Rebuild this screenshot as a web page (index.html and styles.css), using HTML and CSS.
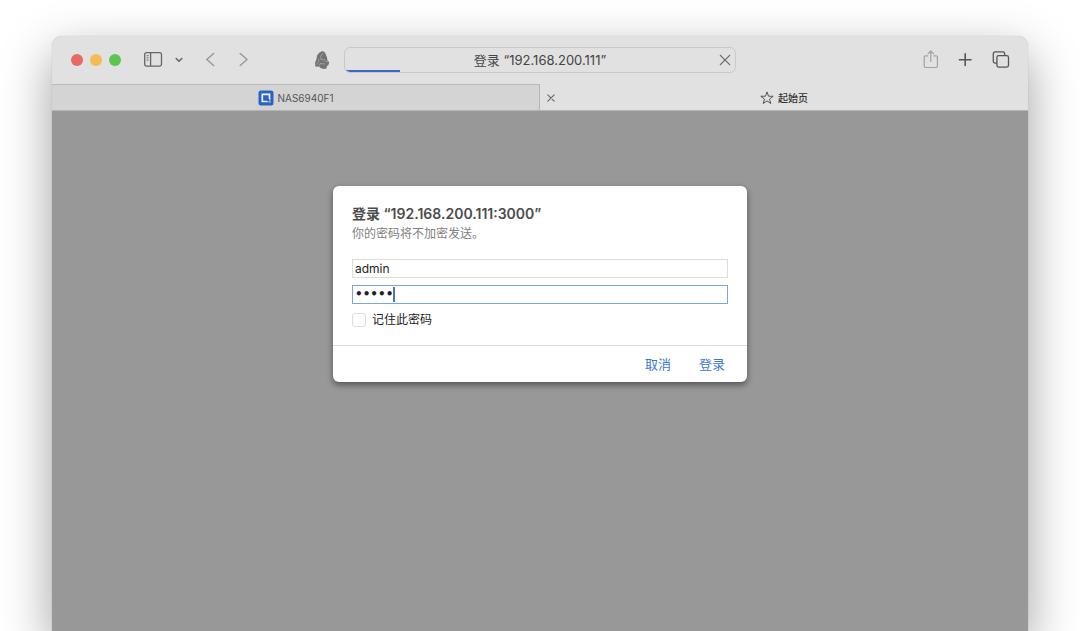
FILE: index.html
```html
<!DOCTYPE html>
<html lang="zh-CN">
<head>
<meta charset="utf-8">
<meta name="viewport" content="width=device-width, initial-scale=1">
<title>登录</title>
<link rel="stylesheet" href="styles.css">
</head>
<body>
<div class="window">
  <header class="toolbar">
    <div class="tools-left">
      <div class="lights">
        <button class="light red" aria-label="关闭窗口"></button>
        <button class="light yellow" aria-label="最小化"></button>
        <button class="light green" aria-label="全屏"></button>
      </div>
      <div class="sidebar-tools">
        <button class="icon" aria-label="边栏">
          <svg width="20" height="18" viewBox="0 0 20 18" fill="none" stroke="#666" stroke-width="1.3"><rect x="1.7" y="1.7" width="16.8" height="13.4" rx="1.8"/><path d="M7.6 1.7v13.4"/><path d="M3.6 4.700h2M3.6 6.900h2M3.6 9.100h2" stroke-width="1"/></svg>
        </button>
        <button class="icon" aria-label="标签页组">
          <svg width="8" height="18" viewBox="0 0 8 18" fill="none" stroke="#666" stroke-width="1.6" stroke-linecap="round" stroke-linejoin="round"><path d="M1.2 7.500 4 10.300 6.800 7.500"/></svg>
        </button>
      </div>
      <div class="history">
        <button class="icon" aria-label="后退">
          <svg width="10" height="18" viewBox="0 0 10 18" fill="none" stroke="#999" stroke-width="1.5" stroke-linecap="round" stroke-linejoin="round"><path d="M8.600 2.500 1.800 8.500l6.800 6"/></svg>
        </button>
        <button class="icon" aria-label="前进">
          <svg width="10" height="18" viewBox="0 0 10 18" fill="none" stroke="#999" stroke-width="1.5" stroke-linecap="round" stroke-linejoin="round"><path d="m2.200 2.500 6.800 6-6.800 6"/></svg>
        </button>
      </div>
      <button class="icon extension" aria-label="扩展">
        <svg width="16" height="20" viewBox="0 0 16 20"><path fill="#747474" d="M8.500 1 11 2.500l2 5 .5 3 1.700 1.500-.700 3-1.500 1-.500 2.500-3 .500L6.500 18l-1.500-1.500-3.500.300L1 13 2.500 9 3 5.500 5.500 2.500z"/><path fill="none" stroke="#a8a8a8" stroke-width=".8" d="M9 3 6.500 6.500l.500 3M7 9.500l4 .500M11 11l3 1M5 9 4.500 12l-2 2.500M6 13.500l5 .500M5.500 16l.500-2.500"/></svg>
      </button>
    </div>
    <div class="address">
      <input class="address-input" type="text" aria-label="地址" value="登录 “192.168.200.111”" readonly>
      <button class="icon stop" aria-label="停止载入">
        <svg width="12" height="12" viewBox="0 0 12 12" stroke="#666" stroke-width="1.2" stroke-linecap="round"><path d="m1.300 1.300 9.400 9.400M10.700 1.300 1.300 10.700"/></svg>
      </button>
      <div class="progress"></div>
    </div>
    <div class="tools-right">
      <button class="icon" aria-label="共享">
        <svg width="16" height="20" viewBox="0 0 16 20" fill="none" stroke="#a2a2a2" stroke-width="1.200" stroke-linecap="round" stroke-linejoin="round"><path d="M5.700 5.800H3.400A1.200 1.200 0 0 0 2.200 7v9.300a1.200 1.200 0 0 0 1.200 1.200h10.800a1.200 1.200 0 0 0 1.200-1.200V7a1.200 1.200 0 0 0-1.200-1.200h-2.300M8.800 11.500V1M6.100 3.700 8.800 1l2.700 2.700"/></svg>
      </button>
      <button class="icon" aria-label="新建标签页">
        <svg width="14" height="14" viewBox="0 0 14 14" stroke="#555" stroke-width="1.600" stroke-linecap="round"><path d="M7.200 .900v11.600M1.400 6.700h11.600"/></svg>
      </button>
      <button class="icon" aria-label="标签页概览">
        <svg width="18" height="18" viewBox="0 0 18 18" fill="none" stroke="#555" stroke-width="1.300" stroke-linejoin="round"><rect x="4.900" y="4.700" width="11.600" height="11.400" rx="1.800"/><path d="M4.900 12.100H3.100a1.800 1.800 0 0 1-1.800-1.800V2.700A1.800 1.800 0 0 1 3.100 .900h7.800a1.800 1.800 0 0 1 1.800 1.800v2"/></svg>
      </button>
    </div>
  </header>

  <nav class="tabs" aria-label="标签页">
    <div class="tab inactive">
      <svg width="16" height="16" viewBox="0 0 16 16"><rect x=".5" y=".5" width="15" height="15" rx="2.500" fill="#2c62c0"/><path d="M4.300 4.300h7.200v7.200H4.300z" fill="none" stroke="#eef5ff" stroke-width="1.700"/><path d="m9.400 9.400 3.300 3.300" stroke="#2c62c0" stroke-width="2.600"/><path d="m10.800 10.800 1.700 1.700" stroke="#9cc4f5" stroke-width="1.400"/></svg>
      <span>NAS6940F1</span>
    </div>
    <div class="tab active">
      <button class="icon tab-close" aria-label="关闭标签页">
        <svg width="8" height="8" viewBox="0 0 8 8" stroke="#666" stroke-width="1.100" stroke-linecap="round"><path d="m.8.8 6.400 6.400M7.200.8.8 7.200"/></svg>
      </button>
      <svg width="14" height="14" viewBox="0 0 14 14" fill="none" stroke="#555" stroke-width="1" stroke-linejoin="round"><path d="m7 .9 1.500 4.300 4.700.1-3.700 2.800 1.300 4.400L7 9.900l-3.800 2.600 1.300-4.400L.8 5.300l4.700-.1z"/></svg>
      <span>起始页</span>
    </div>
  </nav>

  <main class="page">
    <form class="dialog" role="dialog" aria-labelledby="dialog-title">
      <div class="dialog-body">
        <h1 class="dialog-title" id="dialog-title">登录 “192.168.200.111:3000”</h1>
        <p class="dialog-note">你的密码将不加密发送。</p>
        <input class="field" type="text" value="admin" aria-label="用户名">
        <div class="password">
          <input class="field focused" type="password" value="admin" aria-label="密码">
          <span class="caret"></span>
        </div>
        <label class="remember"><input class="checkbox" type="checkbox">记住此密码</label>
      </div>
      <footer class="dialog-actions">
        <button class="action" type="button">取消</button>
        <button class="action" type="button">登录</button>
      </footer>
    </form>
  </main>
</div>
</body>
</html>
```
FILE: styles.css
```css
* {
  box-sizing: border-box;
}

body {
  margin: 0;
  min-height: 100vh;
  display: flex;
  padding: 36px 52px 0;
  overflow: hidden;
  background: #fff;
  color: #444;
  font-family: Inter, "Noto Sans CJK SC", sans-serif;
  font-size: 12px;
}

button,
input {
  margin: 0;
  padding: 0;
  border: 0;
  background: none;
  color: inherit;
  font: inherit;
  outline: none;
}

svg {
  display: block;
  flex: none;
}

.window {
  flex: 1;
  min-width: 0;
  display: flex;
  flex-direction: column;
  border-radius: 10px 10px 0 0;
  background: #e1e1e1;
  box-shadow: 0 0 1px rgba(0, 0, 0, 0.3), 0 18px 50px rgba(0, 0, 0, 0.38);
}

.toolbar {
  display: grid;
  grid-template-columns: minmax(0, 1fr) 392px minmax(0, 1fr);
  align-items: center;
  height: 48px;
}

.icon {
  display: flex;
  align-items: center;
}

.tools-left,
.tools-right,
.lights,
.sidebar-tools,
.history {
  display: flex;
  align-items: center;
}

.tools-left {
  gap: 22px;
  padding: 0 14px 0 19px;
}

.lights {
  gap: 7px;
}

.light {
  width: 12px;
  height: 12px;
  border-radius: 50%;
}

.red {
  background: #e66a61;
}

.yellow {
  background: #f3bb51;
}

.green {
  background: #5dc353;
}

.sidebar-tools {
  gap: 12px;
}

.history {
  gap: 23px;
}

.extension {
  margin-left: auto;
}

.tools-right {
  justify-content: flex-end;
  gap: 20px;
  padding-right: 18px;
}

.address {
  position: relative;
  height: 26px;
  border: 1px solid #c9c9c9;
  border-radius: 6px;
  overflow: hidden;
}

.address-input {
  display: block;
  width: 100%;
  height: 24px;
  padding-bottom: 2px;
  font-size: 13px;
  text-align: center;
}

.stop {
  position: absolute;
  top: 6px;
  right: 4px;
}

.progress {
  position: absolute;
  left: 0;
  bottom: 0;
  width: 14%;
  height: 2px;
  background: #3c68c8;
}

.tabs {
  display: grid;
  grid-template-columns: 1fr 1fr;
  height: 27px;
  border-bottom: 1px solid #b4b4b4;
  font-size: 10px;
}

.tab {
  position: relative;
  display: flex;
  align-items: center;
  justify-content: center;
  gap: 4px;
}

.inactive {
  border-top: 1px solid #bababa;
  border-right: 1px solid #b4b4b4;
  background: #d4d4d4;
  color: #555;
}

.active {
  padding-top: 1px;
  color: #333;
  font-weight: 500;
}

.tab-close {
  position: absolute;
  left: 7px;
}

.page {
  flex: 1;
  display: flex;
  justify-content: center;
  align-items: flex-start;
  padding-top: 75px;
  background: #989898;
}

.dialog {
  width: 414px;
  border-radius: 6px;
  background: #fff;
  box-shadow: 0 3px 6px rgba(0, 0, 0, 0.45);
}

.dialog-body {
  padding: 18px 19px 15px;
}

.dialog-title {
  margin: 0;
  color: #4c4c4c;
  font-size: 14px;
  font-weight: 600;
  line-height: 20px;
}

.dialog-note {
  margin: 0 0 15px;
  color: #808080;
  font-size: 12px;
  line-height: 20px;
}

.field {
  display: block;
  width: 100%;
  height: 19px;
  padding: 0 2px 1px;
  border: 1px solid #dcdcdc;
  color: #222;
  line-height: 16px;
}

.password {
  position: relative;
  margin: 7px 0 6px;
}

.focused {
  border-color: #78a4ea;
  font-family: "DejaVu Sans", sans-serif;
  font-weight: 700;
}

.caret {
  position: absolute;
  top: 2px;
  left: 41px;
  width: 2px;
  height: 15px;
  background: #4a6ed8;
}

.remember {
  display: flex;
  align-items: center;
  gap: 6px;
  color: #222;
  line-height: 20px;
}

.checkbox {
  appearance: none;
  width: 14px;
  height: 14px;
  border: 1px solid #dcdcdc;
  border-radius: 3px;
}

.dialog-actions {
  display: flex;
  justify-content: flex-end;
  gap: 28px;
  padding: 8px 22px;
  border-top: 1px solid #dcdcdc;
}

.action {
  color: #3c78d0;
  font-size: 13px;
  line-height: 20px;
}
```
